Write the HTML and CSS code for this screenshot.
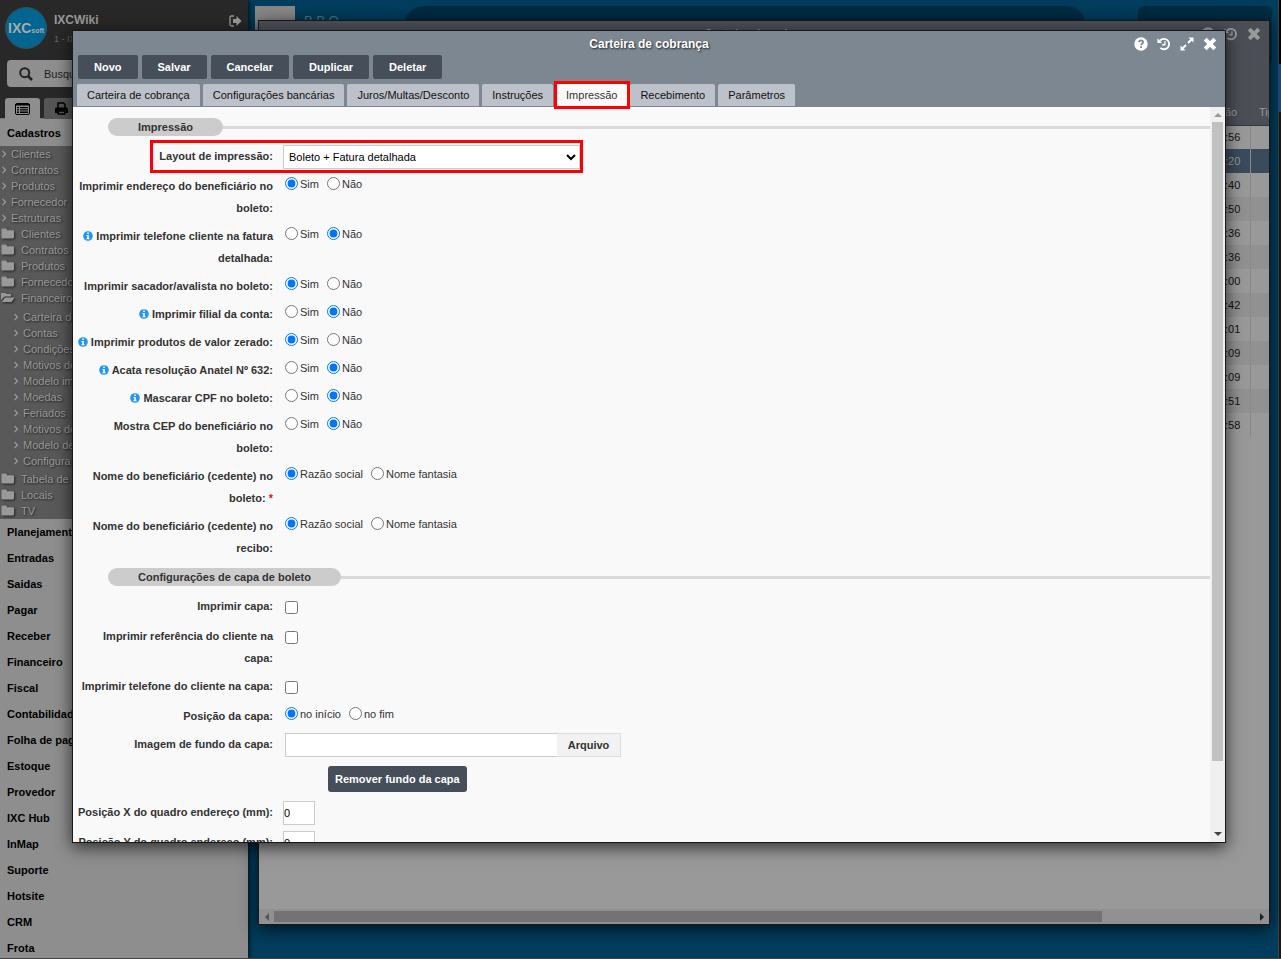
FILE: index.html
```html
<!DOCTYPE html>
<html lang="pt-BR">
<head>
<meta charset="utf-8">
<title>IXCWiki - Carteira de cobrança</title>
<link rel="stylesheet" href="styles.css">
</head>
<body>
<svg class="defs" aria-hidden="true">
  <symbol id="folder" viewBox="0 0 12 10"><path d="M0 1.5Q0 .5 1 .5H4Q5 .5 5 1.5V2H10.500Q11.500 2 11.500 3V8.500Q11.500 9.500 10.500 9.500H1Q0 9.500 0 8.500Z"/></symbol>
  <symbol id="folder-open" viewBox="0 0 14 10"><path d="M0 7.500V1.500Q0 .5 1 .5H4Q5 .5 5 1.500H9Q10 1.500 10 2.500V4H4.500Q3.500 4 2.800 4.800ZM1 9.500L3.500 5.500Q4 5 4.800 5H13.500L11 9Q10.600 9.500 10 9.500Z"/></symbol>
  <symbol id="chevron" viewBox="0 0 6 8"><path d="M1.500 1L4.500 4L1.500 7" fill="none" stroke="currentColor" stroke-width="1.300"/></symbol>
  <symbol id="info" viewBox="0 0 10 10"><circle cx="5" cy="5" r="4.800" fill="#2196f3"/><path d="M4.200 1.500H5.800V3H4.200ZM3.500 4H5.800V7.300H6.600V8.300H3.500V7.300H4.200V5H3.500Z" fill="#fff"/></symbol>
  <symbol id="history" viewBox="0 0 15 14"><path d="M3.200 3.300A5.600 5.600 0 1 1 3.600 11.200" fill="none" stroke="currentColor" stroke-width="2"/><path d="M.5 .8V5.800H5.500Z" fill="currentColor"/><path d="M8.500 4V7.800H5.500" fill="none" stroke="currentColor" stroke-width="1.400"/></symbol>
  <symbol id="close" viewBox="0 0 14 14"><path d="M2.200 2.200L11.800 11.800M11.800 2.200L2.200 11.800" stroke="currentColor" stroke-width="4"/></symbol>
  <symbol id="help" viewBox="0 0 14 14"><circle cx="7" cy="7" r="6.700" fill="currentColor"/><path d="M4.900 5.200Q5.200 3.400 7 3.400Q9.200 3.500 9.100 5.200Q9 6.200 7.900 6.800Q7.100 7.200 7.100 8.200M7.100 9.300V11" fill="none" stroke="#7d8791" stroke-width="1.800"/></symbol>
  <symbol id="expand" viewBox="0 0 14 14"><path d="M8.500 .5H13.500V5.500ZM.5 8.500V13.500H5.500Z" fill="currentColor"/><path d="M2.500 11.500L6 8M8 6L11.500 2.500" stroke="currentColor" stroke-width="2"/></symbol>
</svg>
<div class="desktop">
  <aside class="sidebar">
    <header class="account">
      <svg class="logo" viewBox="0 0 42 42" role="img" aria-label="IXCsoft"><circle cx="21" cy="21" r="20.500" fill="#006590" stroke="#3b4c55"/><text x="3" y="26" class="logo-text">IXC<tspan class="logo-small">soft</tspan></text></svg>
      <div class="account-text"><strong>IXCWiki</strong><small>1 - IXC</small></div>
      <button class="exit" aria-label="Sair"><svg width="13" height="12" viewBox="0 0 13 12"><path d="M5 1H2.500Q1 1 1 2.500V9.500Q1 11 2.500 11H5" fill="none" stroke="currentColor" stroke-width="1.300"/><path d="M4 4H7.500V1L12.500 6L7.500 11V8H4Z" fill="currentColor"/></svg></button>
    </header>
    <label class="search"><svg width="14" height="14" viewBox="0 0 14 14"><circle cx="5.700" cy="5.700" r="4.500" fill="none" stroke="#222" stroke-width="2"/><path d="M9 9L13 13" stroke="#222" stroke-width="2.500"/></svg><input type="text" placeholder="Busque aqui" aria-label="Buscar"></label>
    <div class="side-tabs">
      <button class="side-tab on" aria-label="Menu"><svg width="15" height="12" viewBox="0 0 15 12"><rect x=".5" y=".5" width="14" height="11" rx="1.500" fill="none" stroke="#000"/><path d="M0 1H15V2.500H0ZM2 4H4V5.300H2ZM5 4H13V5.300H5ZM2 6.300H4V7.600H2ZM5 6.300H13V7.600H5ZM2 8.600H4V9.900H2ZM5 8.600H13V9.900H5Z"/></svg></button>
      <button class="side-tab" aria-label="Relatórios"><svg width="13" height="13" viewBox="0 0 13 13"><path d="M3 6V1H8.500L10 2.500V6M3.200 9V12H9.800V9Z" fill="none" stroke="#000" stroke-width="1.500"/><path d="M0 11V7Q0 5.500 1.500 5.500H11.500Q13 5.500 13 7V11H10.500V8.500H2.500V11Z"/></svg></button>
    </div>
    <nav class="menu">
      <a class="group" href="#">Cadastros</a>
      <div class="tree">
        <a href="#"><svg class="chev"><use href="#chevron"/></svg>Clientes</a>
        <a href="#"><svg class="chev"><use href="#chevron"/></svg>Contratos</a>
        <a href="#"><svg class="chev"><use href="#chevron"/></svg>Produtos</a>
        <a href="#"><svg class="chev"><use href="#chevron"/></svg>Fornecedor</a>
        <a href="#"><svg class="chev"><use href="#chevron"/></svg>Estruturas</a>
        <a href="#"><svg class="fold"><use href="#folder"/></svg>Clientes</a>
        <a href="#"><svg class="fold"><use href="#folder"/></svg>Contratos</a>
        <a href="#"><svg class="fold"><use href="#folder"/></svg>Produtos</a>
        <a href="#"><svg class="fold"><use href="#folder"/></svg>Fornecedor</a>
        <a href="#"><svg class="fold"><use href="#folder-open"/></svg>Financeiro</a>
        <div class="branch">
          <a href="#"><svg class="chev"><use href="#chevron"/></svg>Carteira de</a>
          <a href="#"><svg class="chev"><use href="#chevron"/></svg>Contas</a>
          <a href="#"><svg class="chev"><use href="#chevron"/></svg>Condições</a>
          <a href="#"><svg class="chev"><use href="#chevron"/></svg>Motivos de</a>
          <a href="#"><svg class="chev"><use href="#chevron"/></svg>Modelo im</a>
          <a href="#"><svg class="chev"><use href="#chevron"/></svg>Moedas</a>
          <a href="#"><svg class="chev"><use href="#chevron"/></svg>Feriados</a>
          <a href="#"><svg class="chev"><use href="#chevron"/></svg>Motivos de</a>
          <a href="#"><svg class="chev"><use href="#chevron"/></svg>Modelo de</a>
          <a href="#"><svg class="chev"><use href="#chevron"/></svg>Configura</a>
        </div>
        <a href="#"><svg class="fold"><use href="#folder"/></svg>Tabela de</a>
        <a href="#"><svg class="fold"><use href="#folder"/></svg>Locais</a>
        <a href="#"><svg class="fold"><use href="#folder"/></svg>TV</a>
      </div>
      <a class="group" href="#">Planejamento</a>
      <a class="group" href="#">Entradas</a>
      <a class="group" href="#">Saidas</a>
      <a class="group" href="#">Pagar</a>
      <a class="group" href="#">Receber</a>
      <a class="group" href="#">Financeiro</a>
      <a class="group" href="#">Fiscal</a>
      <a class="group" href="#">Contabilidade</a>
      <a class="group" href="#">Folha de pag</a>
      <a class="group" href="#">Estoque</a>
      <a class="group" href="#">Provedor</a>
      <a class="group" href="#">IXC Hub</a>
      <a class="group" href="#">InMap</a>
      <a class="group" href="#">Suporte</a>
      <a class="group" href="#">Hotsite</a>
      <a class="group" href="#">CRM</a>
      <a class="group" href="#">Frota</a>
    </nav>
  </aside>
  <main class="workspace">
    <div class="topbar">
      <div class="brand-box"></div>
      <div class="brand">B B O —</div>
      <div class="pill"></div>
      <div class="card"></div>
    </div>
  </main>
  <div class="edge"></div>

  <section class="window back">
    <header class="back-head">
      <h2>Carteira de cobrança</h2>
      <div class="icons"><svg><use href="#help"/></svg><svg><use href="#history"/></svg><svg><use href="#close"/></svg></div>
    </header>
    <table class="grid">
      <thead><tr><th></th><th class="time">ão</th><th class="type">Tip</th></tr></thead>
      <tbody>
        <tr><td></td><td class="time">:56</td><td></td></tr>
        <tr class="selected"><td></td><td class="time">:20</td><td></td></tr>
        <tr><td></td><td class="time">:40</td><td></td></tr>
        <tr><td></td><td class="time">:50</td><td></td></tr>
        <tr><td></td><td class="time">:36</td><td></td></tr>
        <tr><td></td><td class="time">:36</td><td></td></tr>
        <tr><td></td><td class="time">:00</td><td></td></tr>
        <tr><td></td><td class="time">:42</td><td></td></tr>
        <tr><td></td><td class="time">:01</td><td></td></tr>
        <tr><td></td><td class="time">:09</td><td></td></tr>
        <tr><td></td><td class="time">:09</td><td></td></tr>
        <tr><td></td><td class="time">:51</td><td></td></tr>
        <tr><td></td><td class="time">:58</td><td></td></tr>
      </tbody>
    </table>
    <div class="hscroll"><i class="arrow left"></i><div class="track"><div class="thumb"></div></div><i class="arrow right"></i></div>
  </section>

  <section class="window front">
    <header class="head">
      <div class="title-bar">
        <h1>Carteira de cobrança</h1>
        <div class="icons">
          <button aria-label="Ajuda"><svg><use href="#help"/></svg></button>
          <button aria-label="Histórico"><svg><use href="#history"/></svg></button>
          <button aria-label="Expandir"><svg><use href="#expand"/></svg></button>
          <button aria-label="Fechar"><svg><use href="#close"/></svg></button>
        </div>
      </div>
      <div class="actions">
        <button class="btn">Novo</button><button class="btn">Salvar</button><button class="btn">Cancelar</button><button class="btn">Duplicar</button><button class="btn">Deletar</button>
      </div>
      <div class="tabs">
        <button class="tab">Carteira de cobrança</button><button class="tab">Configurações bancárias</button><button class="tab">Juros/Multas/Desconto</button><button class="tab">Instruções</button><button class="tab active">Impressão</button><button class="tab">Recebimento</button><button class="tab">Parâmetros</button>
      </div>
    </header>
    <div class="body">
      <form class="form">
        <h3 class="section"><span>Impressão</span></h3>
        <div class="row mark"><label class="name" for="layout">Layout de impressão:</label><select id="layout" class="select"><option>Boleto + Fatura detalhada</option></select></div>
        <div class="row"><span class="name">Imprimir endereço do beneficiário no boleto:</span><div class="radios"><label><input type="radio" name="r1" checked>Sim</label><label><input type="radio" name="r1">Não</label></div></div>
        <div class="row"><span class="name"><svg class="info"><use href="#info"/></svg>Imprimir telefone cliente na fatura detalhada:</span><div class="radios"><label><input type="radio" name="r2">Sim</label><label><input type="radio" name="r2" checked>Não</label></div></div>
        <div class="row"><span class="name">Imprimir sacador/avalista no boleto:</span><div class="radios"><label><input type="radio" name="r3" checked>Sim</label><label><input type="radio" name="r3">Não</label></div></div>
        <div class="row"><span class="name"><svg class="info"><use href="#info"/></svg>Imprimir filial da conta:</span><div class="radios"><label><input type="radio" name="r4">Sim</label><label><input type="radio" name="r4" checked>Não</label></div></div>
        <div class="row"><span class="name"><svg class="info"><use href="#info"/></svg>Imprimir produtos de valor zerado:</span><div class="radios"><label><input type="radio" name="r5" checked>Sim</label><label><input type="radio" name="r5">Não</label></div></div>
        <div class="row"><span class="name"><svg class="info"><use href="#info"/></svg>Acata resolução Anatel Nº 632:</span><div class="radios"><label><input type="radio" name="r6">Sim</label><label><input type="radio" name="r6" checked>Não</label></div></div>
        <div class="row"><span class="name"><svg class="info"><use href="#info"/></svg>Mascarar CPF no boleto:</span><div class="radios"><label><input type="radio" name="r7">Sim</label><label><input type="radio" name="r7" checked>Não</label></div></div>
        <div class="row"><span class="name">Mostra CEP do beneficiário no boleto:</span><div class="radios"><label><input type="radio" name="r8">Sim</label><label><input type="radio" name="r8" checked>Não</label></div></div>
        <div class="row"><span class="name">Nome do beneficiário (cedente) no boleto: <b class="req">*</b></span><div class="radios"><label><input type="radio" name="r9" checked>Razão social</label><label><input type="radio" name="r9">Nome fantasia</label></div></div>
        <div class="row"><span class="name">Nome do beneficiário (cedente) no recibo:</span><div class="radios"><label><input type="radio" name="r10" checked>Razão social</label><label><input type="radio" name="r10">Nome fantasia</label></div></div>
        <h3 class="section"><span>Configurações de capa de boleto</span></h3>
        <div class="row"><label class="name" for="c1">Imprimir capa:</label><div class="check"><input type="checkbox" id="c1"></div></div>
        <div class="row"><label class="name" for="c2">Imprimir referência do cliente na capa:</label><div class="check"><input type="checkbox" id="c2"></div></div>
        <div class="row"><label class="name" for="c3">Imprimir telefone do cliente na capa:</label><div class="check"><input type="checkbox" id="c3"></div></div>
        <div class="row"><span class="name">Posição da capa:</span><div class="radios"><label><input type="radio" name="r11" checked>no início</label><label><input type="radio" name="r11">no fim</label></div></div>
        <div class="row"><label class="name" for="bg">Imagem de fundo da capa:</label><div class="file"><input type="text" id="bg"><button type="button">Arquivo</button></div></div>
        <div class="remove"><button type="button" class="btn">Remover fundo da capa</button></div>
        <div class="row"><label class="name" for="px">Posição X do quadro endereço (mm):</label><input class="num" type="text" id="px" value="0"></div>
        <div class="row"><label class="name" for="py">Posição Y do quadro endereço (mm):</label><input class="num" type="text" id="py" value="0"></div>
      </form>
      <div class="vscroll"><i class="arrow up"></i><div class="track"><div class="thumb"></div></div><i class="arrow down"></i></div>
    </div>
  </section>
</div>
</body>
</html>
```
FILE: styles.css
```css
*, ::before, ::after { box-sizing: border-box; }
body { margin: 0; font: 11px "Liberation Sans", Arial, sans-serif; color: #333; }
button, input, select { font: inherit; margin: 0; }
button { border: 0; padding: 0; background: none; color: inherit; }
a { color: inherit; text-decoration: none; }
h1, h2, h3 { margin: 0; font-size: 12px; }
.defs { position: absolute; width: 0; height: 0; }

.desktop { position: relative; display: flex; height: 100vh; overflow: hidden; background: #003d5c; border-bottom: 1px solid #444; }

/* Sidebar */
.sidebar { width: 248px; flex: none; display: flex; flex-direction: column; background: #282828; box-shadow: 0 0 6px #000; z-index: 1; overflow: hidden; }
.account { display: flex; height: 60px; padding: 7px 6px 0 5px; gap: 7px; color: #999; }
.logo { width: 42px; height: 42px; }
.logo-text { font: bold 14px "Liberation Sans", Arial, sans-serif; fill: #aaa; }
.logo-small { font-size: 7px; }
.account-text { flex: 1; display: flex; flex-direction: column; gap: 6px; padding-top: 6px; }
.account-text strong { font-size: 12px; line-height: 14px; }
.account-text small { font-size: 9px; line-height: 12px; color: #666; }
.exit { align-self: flex-start; padding-top: 8px; }
.search { display: flex; align-items: center; gap: 10px; height: 27px; margin: 0 7px 11px; padding-left: 12px; border-radius: 4px; background: #8f8f8f; }
.search input { flex: 1; min-width: 0; padding: 0 1px; border: 0; background: none; }
.search input::placeholder { color: #222; opacity: 1; }
.side-tabs { display: flex; gap: 4px; height: 21px; padding-left: 5px; border-bottom: 1px solid #777; }
.side-tab { width: 35px; height: 21px; border-radius: 3px 3px 0 0; background: #555; display: grid; place-items: center; }
.side-tab.on { background: #8e8e8e; }
.menu { flex: 1; background: #8e8e8e; padding-top: 1px; overflow: hidden; }
.menu a { display: block; white-space: nowrap; }
.menu .group { height: 26px; padding-left: 7px; line-height: 27px; font-weight: bold; color: #000; }
.tree { background: #595959; color: #999; text-shadow: 1px 1px 2px #222; }
.menu .tree a { display: flex; align-items: center; height: 16px; line-height: 16px; }
.chev { width: 6px; height: 8px; margin: 0 4px 0 1px; }
.fold { width: 14px; height: 11px; margin: 0 6px 1px 1px; fill: #999; filter: drop-shadow(1px 1px 1px #222); }
.branch { padding: 3px 0 2px 12px; }

/* Workspace */
.workspace { flex: 1; min-width: 0; }
.topbar { display: flex; padding: 6px 6px 0 7px; height: 100px; }
.brand-box { width: 40px; background: #888; }
.brand { width: 109px; padding: 7px 9px; font-size: 13px; color: #5b7482; }
.pill { flex: 1; height: 40px; background: #002b41; border-radius: 20px; }
.card { width: 134px; height: 60px; margin-left: 52px; background: #002b41; border-radius: 6px; }
.edge { width: 3px; background: linear-gradient(#000 64px, #0d4f9e 64px, #0d4f9e 112px, #181818 112px); border-left: 1px solid #444; }

/* Windows */
.window { position: absolute; z-index: 2; display: flex; flex-direction: column; border: 1px solid #181818; box-shadow: 0 4px 16px rgba(0, 0, 0, .7); overflow: hidden; }
.back { left: 258px; right: 11px; top: 20px; bottom: 33px; background: #999; }
.back-head { display: grid; grid-template-columns: 1fr auto 1fr; align-items: center; height: 80px; padding: 0 8px 54px; color: #999; background: #4b4e55; }
.back-head h2 { grid-column: 2; line-height: 20px; }
.icons { display: flex; gap: 9px; justify-content: flex-end; color: #fff; }
.icons button { display: block; }
.icons svg { display: block; width: 14px; height: 14px; }
.back-head .icons { color: #999; }
.grid { width: 100%; border-collapse: collapse; color: #111; }
.grid th { height: 24px; padding: 0 0 1px; font-weight: normal; text-align: left; color: #999; background: #4b4e55; border-bottom: 1px solid #33363b; }
.grid td { height: 24px; padding: 0; }
.grid tbody tr:nth-child(even) { background: #919191; }
.grid tbody tr.selected { background: #3a4b5b; color: #999; }
.grid .time { width: 27px; padding-left: 2px; white-space: nowrap; }
.grid td.time { border-right: 1px solid #888; }
.grid .type { width: 19px; max-width: 19px; padding-left: 9px; overflow: hidden; }
.hscroll { display: flex; align-items: center; height: 15px; margin-top: auto; background: #919191; }
.hscroll .track { flex: 1; }
.hscroll .thumb { width: 84.4%; height: 11px; background: #737373; }
.arrow { flex: none; border: 4px solid transparent; }
.arrow.left { margin: 0 5px 0 2px; border-right-color: #555; border-left-width: 1px; width: 8px; }
.arrow.right { margin: 0 1px 0 5px; border-left-color: #222; }

.front { left: 72px; right: 55px; top: 30px; bottom: 115px; background: #f9f9f9; }
.head { background: #7d8791; padding: 0 5px 0 4px; }
.title-bar { display: grid; grid-template-columns: 1fr auto 1fr; align-items: center; height: 24px; padding: 2px 3px 0 4px; }
.title-bar h1 { grid-column: 2; line-height: 20px; color: #fff; text-shadow: 1px 1px 2px #222; }
.actions { display: flex; gap: 4px; padding-left: 1px; margin-bottom: 5px; }
.btn { height: 24px; padding: 0 16px; border-radius: 2px; background: #464f59; color: #fff; font-weight: bold; }
.tabs { display: flex; gap: 3px; height: 23px; }
.tab { position: relative; height: 22px; padding: 0 10px; border-radius: 2px 2px 0 0; background: #bcc1ca; color: #111; }
.tab.active { height: 23px; padding-bottom: 1px; background: #f9f9f9; color: #333; }
.tab.active::after { content: ""; position: absolute; inset: -3px -3px -2px -2px; border: 3px solid #f00; z-index: 3; }
.body { flex: 1; min-height: 0; display: flex; }
.form { flex: 1; min-width: 0; padding: 8px 0 0 4px; overflow: hidden; }
.section { display: flex; align-items: center; margin: 3px 0 9px 31px; font-size: 11px; }
.section span { padding: 0 30px; line-height: 18px; border-radius: 9px; background: #ccc; }
.section::after { content: ""; flex: 1; height: 3px; background: #d9d9d9; }
.row { position: relative; display: grid; grid-template-columns: 196px 1fr; column-gap: 10px; justify-items: start; align-items: start; padding-bottom: 6px; }
.mark::after { content: ""; position: absolute; left: 73px; top: -5px; width: 433px; height: 33px; border: 3px solid #f00; }
.name { justify-self: end; line-height: 22px; font-weight: bold; text-align: right; }
.info { width: 10px; height: 10px; margin-right: 3px; vertical-align: -1px; }
.req { color: #f00; }
.select { width: 297px; height: 24px; padding: 0 0 0 1px; border: 1px solid #ccc; border-radius: 0; background: #fff; color: #000; }
.radios { display: flex; gap: 8px; padding-left: 2px; }
.radios label { display: flex; align-items: center; gap: 2px; line-height: 18px; }
.radios input { width: 13px; height: 13px; margin-bottom: 2px; }
.check { display: flex; align-items: center; height: 24px; padding-left: 2px; }
.check input { width: 13px; height: 13px; }
.file { display: flex; height: 24px; padding-left: 2px; }
.file input { width: 272px; border: 1px solid #ccc; border-right: 0; background: #fff; }
.file button { width: 64px; border: 1px solid #ddd; border-left: 0; background: #f2f2f2; font-weight: bold; }
.remove { padding: 3px 0 9px 251px; }
.remove .btn { height: 26px; padding: 0 7px; border-radius: 3px; display: block; }
.num { width: 32px; height: 24px; padding: 0; border: 1px solid #ccc; color: #000; }
.vscroll { width: 15px; display: flex; flex-direction: column; align-items: center; background: #f0f0f0; }
.vscroll .track { flex: 1; }
.vscroll .thumb { width: 11px; height: 90.7%; background: #c1c1c1; }
.arrow.up { margin: 2px 0 5px; border-bottom-color: #999; }
.arrow.down { margin: 5px 0 2px; border-top-color: #444; }
```
